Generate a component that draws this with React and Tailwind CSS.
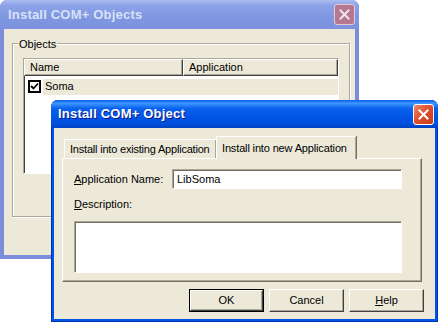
import React from "react";

const raised =
  "border border-t-white border-l-white border-r-[#404040] border-b-[#404040] shadow-[inset_-1px_-1px_#aca899]";
const sunken =
  "border border-t-[#aca899] border-l-[#aca899] border-r-white border-b-white shadow-[inset_1px_1px_#716f64]";

function CloseX({ color }) {
  return (
    <svg width="11" height="11" viewBox="0 0 11 11">
      <path d="M1.5 1.5 L9.5 9.5 M9.5 1.5 L1.5 9.5" stroke={color} strokeWidth="2" strokeLinecap="square" />
    </svg>
  );
}

function Button({ children, def }) {
  return (
    <div className={def ? "border border-black" : ""}>
      <div
        className={
          (def ? "w-[73px] h-[21px] " : "w-[75px] h-[23px] ") +
          raised +
          " bg-[#ece9d8] flex items-center justify-center text-[11px] text-black"
        }
      >
        {children}
      </div>
    </div>
  );
}

export default function App() {
  return (
    <div className="relative w-[440px] h-[323px] bg-white overflow-hidden font-['Liberation_Sans',Arial,sans-serif] text-[11px] text-black">
      {/* Background inactive window */}
      <div className="absolute left-0 top-0 w-[359px] h-[259px] flex flex-col rounded-t-[7px] bg-[#7a8cda] overflow-hidden">
        <div className="h-[29px] shrink-0 flex items-center justify-between pl-[8px] pr-[4px] bg-[linear-gradient(#aabdf1,#8da3e7_18%,#7f96e1_60%,#7c92de)]">
          <span className="text-[13px] font-bold text-[#d8e2f7] tracking-[0.2px]">Install COM+ Objects</span>
          <div className="w-[21px] h-[21px] rounded-[3px] border border-[#e2cbd6] bg-[#b5788e] flex items-center justify-center">
            <CloseX color="#f2e4ea" />
          </div>
        </div>
        <div className="flex-1 mx-[4px] mb-[4px] bg-[#ece9d8] pt-[14px] pl-[8px]">
          <div className="relative w-[338px] h-[174px] border border-[#aca899] shadow-[inset_1px_1px_white,1px_1px_white] pt-[14px] pl-[10px]">
            <span className="absolute left-[5px] top-[-8px] px-[1px] bg-[#ece9d8]">Objects</span>
            <div className={"w-[316px] h-[116px] bg-white " + sunken + " shadow-[inset_1px_1px_#404040]"}>
              <div className="flex h-[17px]">
                <div className={"w-[159px] " + raised + " bg-[#ece9d8] flex items-center pl-[5px]"}>Name</div>
                <div className={"flex-1 " + raised + " bg-[#ece9d8] flex items-center pl-[5px]"}>Application</div>
              </div>
              <div className="flex items-center h-[17px] mt-[2px] pl-[4px]">
                <div className="w-[13px] h-[13px] border-2 border-black bg-white flex items-center justify-center">
                  <svg width="9" height="9" viewBox="0 0 9 9">
                    <path d="M1 4 L3.5 6.5 L8 1.5" stroke="black" strokeWidth="1.8" fill="none" />
                  </svg>
                </div>
                <div className="flex-1 h-[16px] ml-[2px] bg-[#ece9d8] flex items-center pl-[2px]">Soma</div>
              </div>
            </div>
          </div>
        </div>
      </div>

      {/* Foreground active window */}
      <div className="absolute left-[51px] top-[100px] w-[387px] h-[222px] flex flex-col rounded-t-[7px] bg-[#0055e5] overflow-hidden shadow-[inset_0_0_0_1px_#0031b0]">
        <div className="h-[28px] shrink-0 flex items-center justify-between pl-[7px] pr-[4px] bg-[linear-gradient(#0a5ee9,#3d95ff_12%,#0a62ee_30%,#0055e5_60%,#0050dc_85%,#0040c0)]">
          <span className="text-[13px] font-bold text-white [text-shadow:1px_1px_#0a1a8a] tracking-[0.2px]">Install COM+ Object</span>
          <div className="w-[21px] h-[21px] rounded-[3px] border border-white bg-[linear-gradient(135deg,#ec8a6c,#e0512e_45%,#c8391a)] flex items-center justify-center">
            <CloseX color="white" />
          </div>
        </div>
        <div className="flex-1 mx-[3px] mb-[3px] bg-[#ece9d8] flex flex-col pl-[8px] pt-[7px]">
          {/* tabs */}
          <div className="flex items-end h-[23px] pl-[2px] relative z-10">
            <div className="h-[19px] w-[152px] whitespace-nowrap tracking-[-0.2px] border-t border-l border-white shadow-[inset_-1px_0_#aca899,1px_0_#716f64] flex items-center pl-[5px]">
              Install into existing Application
            </div>
            <div className="h-[23px] w-[140px] whitespace-nowrap tracking-[-0.15px] border-t border-l border-white shadow-[inset_-1px_0_#aca899,1px_0_#716f64] bg-[#ece9d8] flex items-start pt-[3px] pl-[5px] mb-[-1px]">
              Install into new Application
            </div>
          </div>
          <div className="w-[360px] h-[124px] border border-t-white border-l-white border-r-[#716f64] border-b-[#716f64] shadow-[inset_-1px_-1px_#aca899] pt-[10px] pl-[11px] flex flex-col">
            <div className="flex items-center h-[20px]">
              <span className="w-[98px]">
                <span className="underline">A</span>pplication Name:
              </span>
              <div className={"w-[230px] h-[20px] bg-white flex items-center pl-[4px] " + sunken}>LibSoma</div>
            </div>
            <div className="mt-[8px] h-[14px] leading-[14px]">
              <span className="underline">D</span>escription:
            </div>
            <div className={"mt-[10px] w-[328px] h-[52px] bg-white " + sunken}></div>
          </div>
          <div className="flex gap-[5px] mt-[7px] ml-[127px]">
            <Button def>OK</Button>
            <Button>Cancel</Button>
            <Button>
              <span className="underline">H</span>elp
            </Button>
          </div>
        </div>
      </div>
    </div>
  );
}
